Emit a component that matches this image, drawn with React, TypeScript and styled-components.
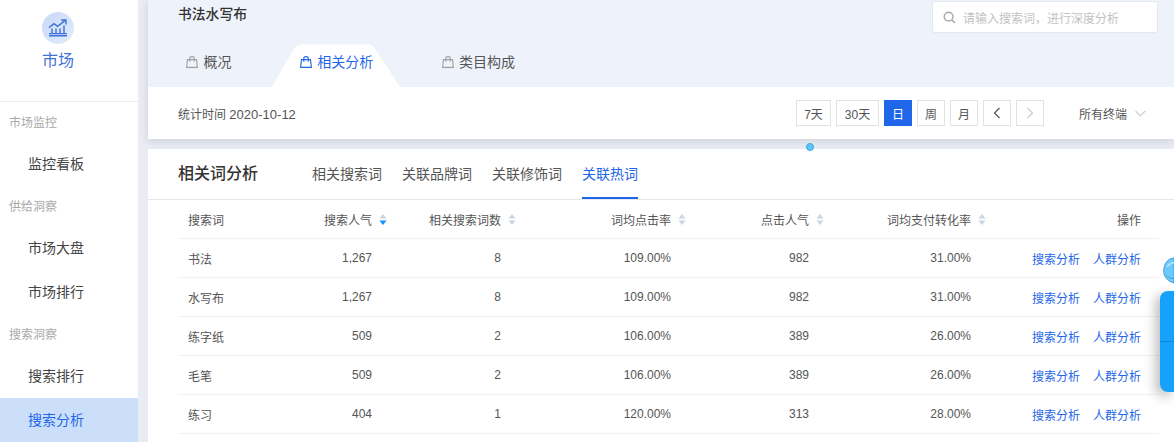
import { Fragment } from "react";
import styled, { createGlobalStyle } from "styled-components";

const BLUE = "#1f66e8";

const rows = [
  ["书法", "1,267", "8", "109.00%", "982", "31.00%"],
  ["水写布", "1,267", "8", "109.00%", "982", "31.00%"],
  ["练字纸", "509", "2", "106.00%", "389", "26.00%"],
  ["毛笔", "509", "2", "106.00%", "389", "26.00%"],
  ["练习", "404", "1", "120.00%", "313", "28.00%"],
];

const columns = ["搜索人气", "相关搜索词数", "词均点击率", "点击人气", "词均支付转化率"];

const BagIcon = () => (
  <svg width="12" height="12" viewBox="0 0 12 12" fill="none" stroke="currentColor" strokeWidth="1.1">
    <path d="M1.5 3.6h9l.9 7.8H.6z" />
    <path d="M3.8 5.8V2.4C3.8 1.2 4.6.6 6 .6s2.2.6 2.2 1.800v3.400" />
  </svg>
);

const SortIcon = ({ active }: { active?: boolean }) => (
  <SortWrap width="8" height="11" viewBox="0 0 8 11">
    <path d="M4 0l3.600 4.400H.4z" fill="#ccd6e4" />
    <path d="M4 11L.4 6.600h7.200z" fill={active ? "#1890ff" : "#ccd6e4"} />
  </SortWrap>
);

const App = () => {
  return (
    <Page>
      <GlobalStyle />
      <Sidebar>
        <Brand>
          <BrandBadge>
            <svg width="20" height="18" viewBox="0 0 20 18" fill="none" stroke="#3f72d8" strokeWidth="1.4">
              <path d="M1 8.600L6 4.600l3.600 2.800L17 1.600" />
              <path d="M13 1h5v4.600" />
              <path d="M1 16.800h18M1 14.600h18" />
              <path d="M4 9.400v5M8 9.400v5M12 9.400v5M16 6.600v8" />
            </svg>
          </BrandBadge>
          <BrandName>市场</BrandName>
        </Brand>
        <GroupTitle>市场监控</GroupTitle>
        <NavItem>监控看板</NavItem>
        <GroupTitle>供给洞察</GroupTitle>
        <NavItem>市场大盘</NavItem>
        <NavItem>市场排行</NavItem>
        <GroupTitle>搜索洞察</GroupTitle>
        <NavItem>搜索排行</NavItem>
        <NavItem active>搜索分析</NavItem>
      </Sidebar>

      <Main>
        <HeadCard>
          <HeadTop>
            <TitleRow>
              <KeywordTitle>书法水写布</KeywordTitle>
              <SearchBox>
                <svg width="13" height="13" viewBox="0 0 13 13" fill="none" stroke="#a8a8a8" strokeWidth="1.4">
                  <circle cx="5.600" cy="5.600" r="4.400" />
                  <path d="M8.900 8.900L12 12" />
                </svg>
                <span>请输入搜索词，进行深度分析</span>
              </SearchBox>
            </TitleRow>
            <PageTabs>
              <PageTab>
                <TabLabel>
                  <BagIcon />
                  概况
                </TabLabel>
              </PageTab>
              <PageTab active>
                <TabShape width="128" height="43" viewBox="0 0 128 43">
                  <path d="M0 43L21 6C23.500 2 26 .5 31 .5H95C99 .5 102 2 104 6L128 43z" fill="#fff" />
                </TabShape>
                <TabLabel>
                  <BagIcon />
                  相关分析
                </TabLabel>
              </PageTab>
              <PageTab>
                <TabLabel>
                  <BagIcon />
                  类目构成
                </TabLabel>
              </PageTab>
            </PageTabs>
          </HeadTop>
          <FilterRow>
            <StatTime>
              统计时间 <StatDate>2020-10-12</StatDate>
            </StatTime>
            <FilterRight>
              <DateButton width={35}>7天</DateButton>
              <DateButton width={43}>30天</DateButton>
              <DateButton active>日</DateButton>
              <DateButton>周</DateButton>
              <DateButton>月</DateButton>
              <DateButton>
                <svg width="8" height="12" viewBox="0 0 8 12" fill="none" stroke="#555" strokeWidth="1.2">
                  <path d="M6.500 1L1.500 6l5 5" />
                </svg>
              </DateButton>
              <DateButton>
                <svg width="8" height="12" viewBox="0 0 8 12" fill="none" stroke="#ccc" strokeWidth="1.2">
                  <path d="M1.500 1l5 5-5 5" />
                </svg>
              </DateButton>
              <Terminal>
                所有终端
                <svg width="11" height="7" viewBox="0 0 11 7" fill="none" stroke="#c8c8c8" strokeWidth="1.1">
                  <path d="M.6.8l4.900 5 4.900-5" />
                </svg>
              </Terminal>
            </FilterRight>
          </FilterRow>
        </HeadCard>
        <Dot />

        <TableCard>
          <TableHead>
            <TableTitle>相关词分析</TableTitle>
            <SubTab>相关搜索词</SubTab>
            <SubTab>关联品牌词</SubTab>
            <SubTab>关联修饰词</SubTab>
            <SubTab active>关联热词</SubTab>
          </TableHead>
          <Grid>
            <Cell align="left">搜索词</Cell>
            {columns.map((c, i) => (
              <Cell key={c}>
                {c}
                <SortIcon active={i === 0} />
              </Cell>
            ))}
            <Cell>操作</Cell>
            {rows.map((r) => (
              <Fragment key={r[0]}>
                <Cell align="left">{r[0]}</Cell>
                {r.slice(1).map((v, i) => (
                  <Cell key={i}>{v}</Cell>
                ))}
                <Cell>
                  <ActionLink>搜索分析</ActionLink>
                  <ActionLink>人群分析</ActionLink>
                </Cell>
              </Fragment>
            ))}
          </Grid>
        </TableCard>

        <Mascot width="11" height="29" viewBox="0 0 11 29">
          <path
            d="M11 1C6 1 2 5 1 11 .3 14 .5 17 2 19.500 4 23 7 25 11 26z"
            fill="#6ccafc"
            stroke="#3a94d2"
            strokeWidth="0.8"
          />
          <path d="M3 18c2 2.500 5 3.500 8 3.500" stroke="#3a94d2" strokeWidth="0.8" fill="none" />
          <path d="M4 10c2-3 4-4 7-4.500" stroke="#b4e5ff" strokeWidth="1.500" fill="none" />
        </Mascot>
        <FloatPanel>
          <FloatSlot />
          <FloatSlot />
        </FloatPanel>
      </Main>
    </Page>
  );
};

export default App;

const GlobalStyle = createGlobalStyle`
  html, body {
    margin: 0;
    padding: 0;
    height: 100%;
    overflow: hidden;
    background: #e9ecf2;
    font-family: "Liberation Sans", "Noto Sans CJK SC", sans-serif;
    color: #555;
  }
`;

const Page = styled.div`
  display: flex;
  width: 1174px;
  height: 442px;
  overflow: hidden;
`;

const Sidebar = styled.aside`
  flex: 0 0 138px;
  background: #fff;
  display: flex;
  flex-direction: column;
`;

const Brand = styled.div`
  flex: none;
  height: 102px;
  box-sizing: border-box;
  border-bottom: 1px solid #ececec;
  display: flex;
  flex-direction: column;
  align-items: center;
  padding: 12px 22px 0 0;
`;

const BrandBadge = styled.div`
  width: 32px;
  height: 32px;
  border-radius: 50%;
  background: linear-gradient(135deg, #c7d9f9, #e3ecfc);
  display: flex;
  align-items: center;
  justify-content: center;
`;

const BrandName = styled.div`
  margin-top: 5px;
  font-size: 16px;
  line-height: 24px;
  color: #3f72d8;
`;

const GroupTitle = styled.div`
  flex: none;
  height: 40px;
  box-sizing: border-box;
  padding: 2px 0 0 9px;
  line-height: 38px;
  font-size: 12px;
  color: #a9a9a9;
`;

const NavItem = styled.div<{ active?: boolean }>`
  flex: none;
  height: 44px;
  line-height: 44px;
  padding-left: 28px;
  font-size: 14px;
  color: ${(props) => (props.active ? BLUE : "#444")};
  background: ${(props) => (props.active ? "#cbdffa" : "transparent")};
`;

const Main = styled.main`
  position: relative;
  flex: 1;
  margin-left: 10px;
  min-width: 0;
  display: flex;
  flex-direction: column;
  gap: 10px;
`;

const HeadCard = styled.section`
  flex: none;
  background: #fff;
  box-shadow: 0 2px 8px rgba(60, 70, 90, 0.16);
`;

const HeadTop = styled.div`
  height: 87px;
  background: #eef3fb;
`;

const TitleRow = styled.div`
  height: 44px;
  box-sizing: border-box;
  padding: 1px 16px 0 30px;
  display: flex;
  justify-content: space-between;
  align-items: flex-start;
`;

const KeywordTitle = styled.div`
  font-size: 13.8px;
  font-weight: 500;
  line-height: 28px;
  color: #333;
`;

const SearchBox = styled.div`
  width: 226px;
  height: 32px;
  box-sizing: border-box;
  background: #fff;
  border: 1px solid #e3e7ee;
  border-radius: 2px;
  display: flex;
  align-items: center;
  gap: 7px;
  padding-left: 10px;
  font-size: 12px;
  color: #c2c2c2;
`;

const PageTabs = styled.div`
  height: 43px;
  box-sizing: border-box;
  padding: 0 0 7px 38px;
  display: flex;
  align-items: center;
  gap: 68.25px;
`;

const PageTab = styled.div<{ active?: boolean }>`
  position: relative;
  font-size: 14px;
  line-height: 20px;
  color: ${(props) => (props.active ? BLUE : "#555")};

  svg {
    color: ${(props) => (props.active ? BLUE : "#a0a0a0")};
  }
`;

const TabLabel = styled.span`
  position: relative;
  display: flex;
  align-items: center;
  gap: 5.5px;
`;

const TabShape = styled.svg`
  position: absolute;
  left: -28px;
  top: -8px;
`;

const FilterRow = styled.div`
  height: 52px;
  box-sizing: border-box;
  padding: 0 28px 0 30px;
  display: flex;
  align-items: center;
  justify-content: space-between;
`;

const StatTime = styled.span`
  font-size: 12px;
  color: #555;
`;

const StatDate = styled.span`
  font-size: 13px;
`;

const FilterRight = styled.div`
  display: flex;
  align-items: center;
  gap: 5px;
`;

const DateButton = styled.div<{ active?: boolean; width?: number }>`
  width: ${(props) => props.width ?? 28}px;
  height: 26px;
  box-sizing: border-box;
  display: flex;
  align-items: center;
  justify-content: center;
  font-size: 12px;
  border: 1px solid ${(props) => (props.active ? BLUE : "#e2e2e2")};
  background: ${(props) => (props.active ? BLUE : "#fff")};
  color: ${(props) => (props.active ? "#fff" : "#555")};
`;

const Terminal = styled.div`
  margin-left: 30px;
  display: flex;
  align-items: center;
  gap: 8px;
  font-size: 12px;
  color: #555;
`;

const Dot = styled.div`
  position: absolute;
  left: 658px;
  top: 143px;
  width: 8px;
  height: 8px;
  border-radius: 50%;
  background: #63c4f7;
  border: 1px solid #38a8e8;
  box-sizing: border-box;
  z-index: 2;
`;

const TableCard = styled.section`
  flex: 1;
  background: #fff;
`;

const TableHead = styled.div`
  height: 51px;
  box-sizing: border-box;
  padding-left: 30px;
  border-bottom: 1px solid #e6e8ec;
  display: flex;
  gap: 20px;
`;

const TableTitle = styled.div`
  width: 114px;
  line-height: 50px;
  font-size: 16px;
  font-weight: 500;
  color: #333;
`;

const SubTab = styled.div<{ active?: boolean }>`
  height: 50px;
  box-sizing: border-box;
  line-height: 50px;
  font-size: 14px;
  color: ${(props) => (props.active ? BLUE : "#555")};
  border-bottom: 2px solid ${(props) => (props.active ? BLUE : "transparent")};
`;

const Grid = styled.div`
  margin: 0 15px 0 30px;
  display: grid;
  grid-template-columns: 100px 112px 129px 170px 138px 162px 170px;
  grid-auto-rows: 39px;
`;

const Cell = styled.div<{ align?: string }>`
  display: flex;
  align-items: center;
  white-space: nowrap;
  justify-content: ${(props) => (props.align === "left" ? "flex-start" : "flex-end")};
  padding: ${(props) => (props.align === "left" ? "0 0 0 10px" : "0 18px 0 0")};
  border-bottom: 1px solid #f0f1f3;
  font-size: 12px;
  color: #555;
`;

const SortWrap = styled.svg`
  flex: none;
  margin: 0 -15px 0 7px;
`;

const ActionLink = styled.span`
  color: ${BLUE};
  margin-left: 13px;
`;

const Mascot = styled.svg`
  position: absolute;
  right: 0;
  top: 257px;
`;

const FloatPanel = styled.div`
  position: absolute;
  right: 0;
  top: 291px;
  width: 14px;
  height: 101px;
  border-radius: 8px 0 0 8px;
  background: #16a2fb;
  box-shadow: -4px 4px 12px rgba(0, 0, 0, 0.28);
  display: flex;
  flex-direction: column;
`;

const FloatSlot = styled.div`
  flex: 1;

  & + & {
    border-top: 1px solid #1286d2;
  }
`;
